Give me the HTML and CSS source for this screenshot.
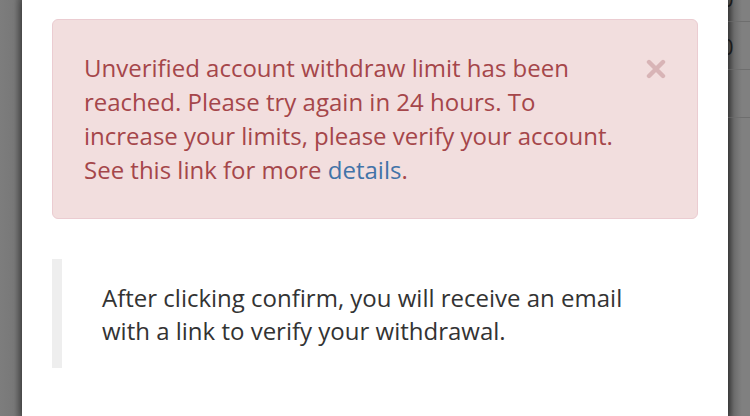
FILE: index.html
```html
<!DOCTYPE html>
<html>
<head>
  <title>Withdraw</title>
  <link rel="stylesheet" href="styles.css">
</head>
<body>
  <div class="backdrop left-side"></div>

  <div class="modal">
    <div class="alert alert-danger">
      <p class="alert-text">
        Unverified account withdraw limit has been reached. Please try again in 24 hours. To increase your limits, please verify your account. See this link for more <a href="#">details</a>.
      </p>
      <button class="close" aria-label="Close">
        <svg width="20" height="20" viewBox="0 0 20 20">
          <path d="M3 3 L17 17 M17 3 L3 17" stroke="currentColor" stroke-width="4.4" stroke-linecap="round"/>
        </svg>
      </button>
    </div>

    <blockquote class="note">
      After clicking confirm, you will receive an email with a link to verify your withdrawal.
    </blockquote>
  </div>

  <div class="backdrop right-side">
    <div class="row"><span>0</span></div>
    <div class="row"><span>0</span></div>
    <div class="row"></div>
  </div>
</body>
</html>
```

FILE: styles.css
```css
body {
  margin: 0;
  padding: 0;
  height: 416px;
  overflow: hidden;
  display: flex;
  font-family: "Open Sans", "Liberation Sans", sans-serif;
  background-color: #808080;
}

.backdrop {
  width: 22px;
  flex-shrink: 0;
  background-color: #7f7f7f;
}

.left-side {
  background: linear-gradient(to right, #7d7d7d 0, #787878 14px, #5c5c5c 22px);
}

.right-side {
  overflow: hidden;
  background: linear-gradient(to right, #4a4a4a 0, #6e6e6e 6px, #808080 14px);
  margin-top: -26px;
}

.right-side .row {
  height: 47px;
  border-bottom: 1px solid #6e6e6e;
  display: flex;
  align-items: center;
  font-size: 22px;
  color: #1e1e1e;
  white-space: nowrap;
}

.right-side .row span {
  margin-left: -7px;
}

.modal {
  flex: 1;
  background-color: #fff;
  padding: 19px 30px 0 30px;
  position: relative;
  z-index: 1;
  box-shadow: 0 0 8px rgba(0, 0, 0, 0.45);
}

.alert {
  display: flex;
  align-items: flex-start;
  padding: 31px 31px 31px 31px;
  border: 1px solid #ebccd1;
  border-radius: 6px;
  background-color: #f2dede;
  color: #a5464a;
}

.alert-text {
  flex: 1;
  margin: 0;
  font-size: 24px;
  line-height: 34px;
  padding-right: 20px;
}

.alert-text a {
  color: #4273a8;
  text-decoration: none;
}

.close {
  border: none;
  background: none;
  padding: 0;
  margin-top: 8px;
  color: #d8b4b6;
  cursor: pointer;
  line-height: 0;
}

.note {
  margin: 40px 0 0 0;
  padding: 22px 40px 21px 40px;
  border-left: 10px solid #eeeeee;
  font-size: 24px;
  line-height: 33px;
  color: #333;
}
```
